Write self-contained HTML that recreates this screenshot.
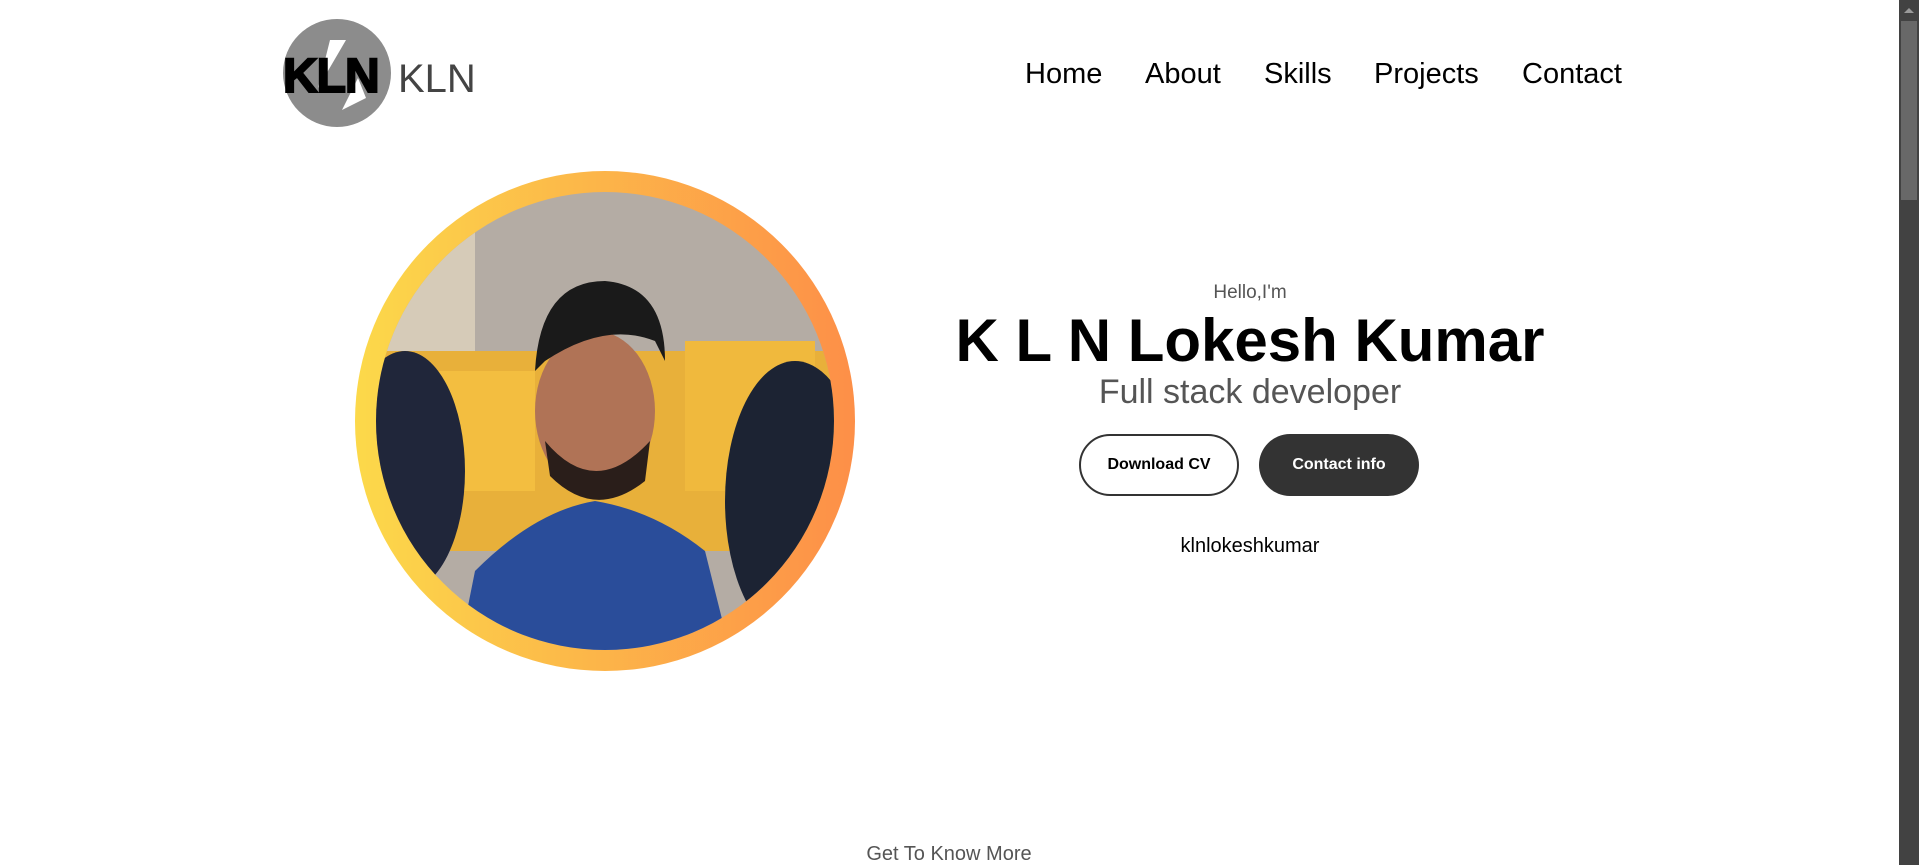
<!DOCTYPE html>
<html><head><meta charset="utf-8"><style>
*{margin:0;padding:0;box-sizing:border-box}
body{width:1919px;height:865px;overflow:hidden;background:#fff;font-family:"Liberation Sans",Arial,sans-serif;position:relative}
.nav a{position:absolute;top:58px;font-size:29px;color:#000;text-decoration:none}
.sb{position:absolute;right:0;top:0;width:20px;height:865px;background:#424242}
.thumb{position:absolute;right:2px;top:21px;width:16px;height:179px;background:#686868}
.btn{position:absolute;top:434px;width:160px;height:62px;border-radius:31px;font-size:16px;font-weight:bold;display:flex;align-items:center;justify-content:center}
.c{position:absolute;left:0;width:2500px;text-align:center}
</style></head><body>
<svg style="position:absolute;left:280px;top:18px" width="200" height="112" viewBox="0 0 200 112">
<circle cx="57" cy="55" r="54" fill="#8c8c8c"/>
<path d="M50 22 L66 22 L38 70 Z M78 60 L62 92 L86 80 Z" fill="#fff"/>
<text x="3" y="74" font-family="Liberation Sans" font-weight="bold" font-size="48" fill="#000" stroke="#000" stroke-width="2" letter-spacing="-1">KLN</text>
<text x="118" y="74" font-family="Liberation Sans" font-size="40" fill="#444">KLN</text>
</svg>
<div class="nav"><a style="left:1025px">Home</a><a style="left:1145px">About</a><a style="left:1264px">Skills</a><a style="left:1374px">Projects</a><a style="left:1522px">Contact</a></div>
<svg style="position:absolute;left:355px;top:171px" width="500" height="500" viewBox="0 0 500 500">
<defs><linearGradient id="g" x1="0" x2="1"><stop offset="0" stop-color="#fcd94a"/><stop offset="1" stop-color="#fd8f48"/></linearGradient>
<clipPath id="cp"><circle cx="250" cy="250" r="229"/></clipPath></defs>
<circle cx="250" cy="250" r="250" fill="url(#g)"/>
<g clip-path="url(#cp)">
<rect width="500" height="500" fill="#b4aca4"/>
<rect x="0" y="0" width="120" height="180" fill="#d6cbb8"/>
<rect x="0" y="180" width="500" height="200" fill="#e8b03a"/>
<rect x="60" y="200" width="120" height="120" fill="#f3be40"/>
<rect x="330" y="170" width="130" height="150" fill="#f0b93d"/>
<ellipse cx="50" cy="300" rx="60" ry="120" fill="#20263a"/>
<ellipse cx="440" cy="330" rx="70" ry="140" fill="#1c2333"/>
<path d="M100 500 L120 400 Q180 340 240 330 Q300 340 350 380 L380 500 Z" fill="#2a4d9a"/>
<ellipse cx="240" cy="240" rx="60" ry="80" fill="#b07356"/>
<path d="M180 200 Q185 110 250 110 Q310 115 310 190 L300 170 Q250 150 190 190 Z" fill="#1a1a1a"/>
<path d="M190 270 Q240 330 295 270 L290 310 Q240 350 195 305 Z" fill="#2a1e1a"/>
</g>
</svg>
<div class="c" style="left:0;width:2500px;top:282px;font-size:19px;color:#555">Hello,I'm</div>
<div class="c" style="top:306px;font-size:60px;font-weight:bold;color:#000">K L N Lokesh Kumar</div>
<div class="c" style="top:373px;font-size:34px;color:#555">Full stack developer</div>
<div class="btn" style="left:1079px;border:2px solid #333;color:#000">Download CV</div>
<div class="btn" style="left:1259px;background:#333;color:#fff">Contact info</div>
<div class="c" style="top:535px;font-size:20px;color:#000">klnlokeshkumar</div>
<div style="position:absolute;left:0;width:1898px;top:843px;text-align:center;font-size:20px;color:#555">Get To Know More</div>
<div class="sb"><div class="thumb"></div><div style="position:absolute;left:5px;top:8px;border-left:5px solid transparent;border-right:5px solid transparent;border-bottom:5px solid #9a9a9a"></div></div>
</body></html>
